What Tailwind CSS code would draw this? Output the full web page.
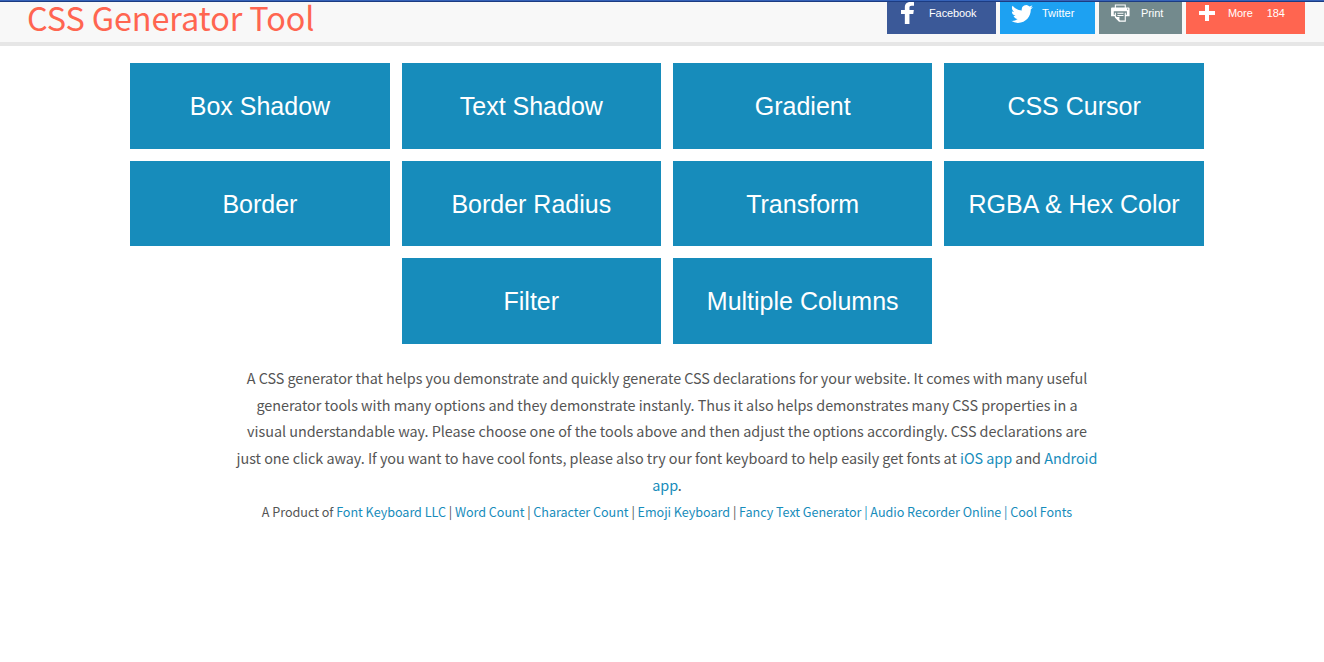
<!DOCTYPE html>
<html lang="en">
<head>
<meta charset="utf-8">
<title>CSS Generator Tool</title>
<script src="https://cdn.jsdelivr.net/npm/@tailwindcss/browser@4"></script>
</head>
<body class="h-[662px] overflow-hidden bg-white font-['Noto_Sans_CJK_SC',sans-serif] text-[#555]">
<header class="flex h-[46px] items-start justify-between border-b-4 border-b-[#e6e6e6] bg-[#f8f8f8] pr-[19px] pl-[27px]">
  <h1 class="text-[32.4px] leading-[33px] tracking-[-0.1px] whitespace-nowrap text-[#ff6550]">CSS Generator Tool</h1>
  <div class="flex h-[34px] gap-1 pt-0.5 font-['Liberation_Sans',sans-serif] text-[11px] leading-[22px] text-white">
    <a class="flex w-[109px] bg-[#3b5998] pl-[5px]"><svg class="mt-[-5px] h-8 w-8 shrink-0" viewBox="0 0 32 32" fill="#fff"><path d="M22 5.16c-.406-.054-1.806-.16-3.43-.16-3.4 0-5.733 1.825-5.733 5.17v2.882H9v3.913h3.837V27h4.604V16.965h3.823l.587-3.913h-4.41v-2.5c0-1.123.347-1.903 2.198-1.903H22V5.16z"/></svg><span class="ml-[5px] tracking-[-0.1px]">Facebook</span></a>
    <a class="flex w-[95px] bg-[#1da1f2] pl-[5px]"><svg class="mt-[-5px] h-8 w-8 shrink-0" viewBox="0 0 32 32" fill="#fff"><path d="M27.996 10.116c-.81.36-1.68.602-2.592.71a4.526 4.526 0 0 0 1.984-2.496 9.037 9.037 0 0 1-2.866 1.095 4.513 4.513 0 0 0-7.69 4.116 12.81 12.81 0 0 1-9.3-4.715 4.49 4.49 0 0 0-.612 2.27 4.51 4.51 0 0 0 2.008 3.755 4.495 4.495 0 0 1-2.044-.564v.057a4.515 4.515 0 0 0 3.62 4.425 4.52 4.52 0 0 1-2.04.077 4.517 4.517 0 0 0 4.217 3.134 9.055 9.055 0 0 1-5.604 1.93A9.18 9.18 0 0 1 6 23.85a12.773 12.773 0 0 0 6.918 2.027c8.3 0 12.84-6.876 12.84-12.84 0-.195-.005-.39-.014-.583a9.172 9.172 0 0 0 2.252-2.336"/></svg><span class="ml-[5px]">Twitter</span></a>
    <a class="flex w-[83px] bg-[#738a8d] pl-[5px]"><svg class="mt-[-5px] h-8 w-8 shrink-0" viewBox="0 0 32 32" fill="#fff"><path d="M24.67 10.62h-2.86V7.49H10.82v3.12H7.95c-.5 0-.9.4-.9.9v7.66h3.77v1.31L15 24.66h6.81v-5.44h3.77v-7.7c-.01-.5-.41-.9-.91-.9zM11.88 8.56h8.86v2.06h-8.86V8.56zm10.98 9.18h-1.05v-2.1h-1.06v7.96H16.4c-1.58 0-.82-3.74-.82-3.74s-3.65.89-3.69-.78v-3.43h-1.06v2.06H9.77v-3.58h13.09v3.61zm.75-4.91c-.4 0-.72-.32-.72-.72 0-.4.32-.72.72-.72.4 0 .72.32.72.72 0 .4-.32.72-.72.72zm-4.12 2.96h-6.1v1.06h6.1v-1.06zm-6.11 3.15h6.1v-1.06h-6.1v1.06z"/></svg><span class="ml-[5px] tracking-[-0.1px]">Print</span></a>
    <a class="flex w-[119px] bg-[#ff6550] pl-[5px]"><svg class="mt-[-5px] h-8 w-8 shrink-0" viewBox="0 0 32 32" fill="#fff"><path d="M18 14V8h-4v6H8v4h6v6h4v-6h6v-4h-6z"/></svg><span class="ml-[5px] tracking-[-0.1px]">More</span><span class="ml-[14px] tracking-[-0.1px]">184</span></a>
  </div>
</header>
<div class="absolute inset-x-0 top-0 h-0.5 border-b border-[#1c3c82] bg-[#3562b8]"></div>
<main class="flex flex-col items-center pl-[10px]">
  <nav class="mt-[17px] flex w-[1074px] flex-wrap justify-center gap-x-[12.1px] gap-y-[11.75px] font-['Liberation_Sans',sans-serif] text-[25px] text-white">
    <a class="flex h-[85.75px] w-[259.3px] items-center justify-center bg-[#178cbb] pt-0.5">Box Shadow</a>
    <a class="flex h-[85.75px] w-[259.3px] items-center justify-center bg-[#178cbb] pt-0.5">Text Shadow</a>
    <a class="flex h-[85.75px] w-[259.3px] items-center justify-center bg-[#178cbb] pt-0.5">Gradient</a>
    <a class="flex h-[85.75px] w-[259.3px] items-center justify-center bg-[#178cbb] pt-0.5">CSS Cursor</a>
    <a class="flex h-[85.75px] w-[259.3px] items-center justify-center bg-[#178cbb] pt-0.5">Border</a>
    <a class="flex h-[85.75px] w-[259.3px] items-center justify-center bg-[#178cbb] pt-0.5">Border Radius</a>
    <a class="flex h-[85.75px] w-[259.3px] items-center justify-center bg-[#178cbb] pt-0.5">Transform</a>
    <a class="flex h-[85.75px] w-[259.3px] items-center justify-center bg-[#178cbb] pt-0.5">RGBA &amp; Hex Color</a>
    <a class="flex h-[85.75px] w-[259.3px] items-center justify-center bg-[#178cbb] pt-0.5">Filter</a>
    <a class="flex h-[85.75px] w-[259.3px] items-center justify-center bg-[#178cbb] pt-0.5">Multiple Columns</a>
  </nav>
  <p class="mt-[21.4px] text-center text-[14.4px] leading-[26.6px] tracking-[-0.035px] whitespace-nowrap">A CSS generator that helps you demonstrate and quickly generate CSS declarations for your website. It comes with many useful<br>generator tools with many options and they demonstrate instanly. Thus it also helps demonstrates many CSS properties in a<br>visual understandable way. Please choose one of the tools above and then adjust the options accordingly. CSS declarations are<br>just one click away. If you want to have cool fonts, please also try our font keyboard to help easily get fonts at <a class="text-[#178cbb]">iOS app</a> and <a class="text-[#178cbb]">Android<br>app</a>.</p>
  <footer class="-mt-[0.4px] text-center text-[12.6px] leading-7 tracking-[-0.03px] whitespace-nowrap">A Product of <a class="text-[#178cbb]">Font Keyboard LLC</a> | <a class="text-[#178cbb]">Word Count</a> | <a class="text-[#178cbb]">Character Count</a> | <a class="text-[#178cbb]">Emoji Keyboard</a> | <a class="text-[#178cbb]">Fancy Text Generator | Audio Recorder Online | Cool Fonts</a></footer>
</main>
</body>
</html>
